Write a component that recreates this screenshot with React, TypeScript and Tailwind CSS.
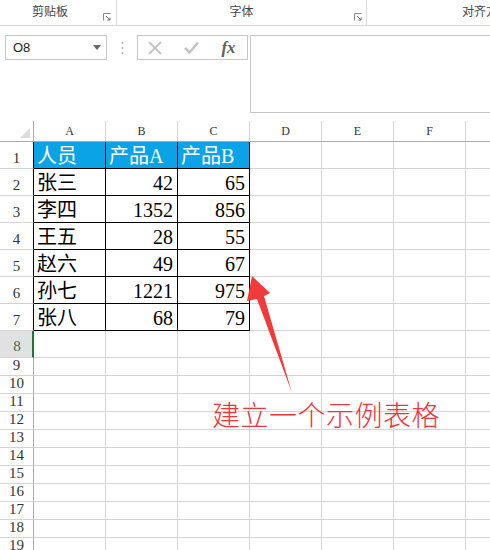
import React from "react";

const COLS = ["A", "B", "C", "D", "E", "F", ""];
const DATA: (string | number)[][] = [
  ["人员", "产品A", "产品B"],
  ["张三", 42, 65],
  ["李四", 1352, 856],
  ["王五", 28, 55],
  ["赵六", 49, 67],
  ["孙七", 1221, 975],
  ["张八", 68, 79],
];

const cellFont = { fontFamily: '"Liberation Serif", "Noto Sans CJK SC", serif' };

function Launcher() {
  return (
    <svg width="8" height="8" viewBox="0 0 8 8" className="block">
      <path d="M0.5 7.5V0.5H7.5" fill="none" stroke="#8a8a8a" strokeWidth="1" />
      <path d="M3 3L7 7M7 4.5V7H4.5" fill="none" stroke="#6a6a6a" strokeWidth="1" />
    </svg>
  );
}

function Ribbon() {
  return (
    <div
      className="flex h-[26px] border-b border-[#d5d5d5] bg-white text-[12px] text-[#444]"
      style={{ fontFamily: '"Noto Sans CJK SC", sans-serif' }}
    >
      <div className="relative flex w-[117px] items-center justify-center border-r border-[#dadada] pb-[4px]">
        <span className="pr-[16px]">剪贴板</span>
        <div className="absolute right-[5px] top-[13px]">
          <Launcher />
        </div>
      </div>
      <div className="relative flex w-[250px] items-center justify-center border-r border-[#dadada] pb-[4px]">
        <span>字体</span>
        <div className="absolute right-[4px] top-[13px]">
          <Launcher />
        </div>
      </div>
      <div className="flex flex-1 items-center justify-end overflow-hidden pb-[4px]">
        <span className="mr-[-20px] whitespace-nowrap">对齐方式</span>
      </div>
    </div>
  );
}

function FormulaBar() {
  return (
    <div className="flex h-[95px] items-start pt-[9px]">
      <div className="ml-[5px] flex h-[25px] w-[102px] items-center justify-between border border-[#c6c6c6] bg-white px-[7px]">
        <span className="text-[13px] text-[#222]" style={{ fontFamily: '"Liberation Sans", sans-serif' }}>
          O8
        </span>
        <svg width="8" height="5" viewBox="0 0 8 5" className="mr-[-2px]">
          <path d="M0 0H8L4 5Z" fill="#666" />
        </svg>
      </div>
      <div className="flex h-[25px] w-[30px] items-center justify-center">
        <svg width="3" height="14" viewBox="0 0 3 14">
          <circle cx="1.5" cy="2" r="1" fill="#b5b5b5" />
          <circle cx="1.5" cy="7" r="1" fill="#b5b5b5" />
          <circle cx="1.5" cy="12" r="1" fill="#b5b5b5" />
        </svg>
      </div>
      <div className="flex h-[25px] w-[111px] items-center border border-[#c6c6c6] bg-white">
        <div className="flex w-[34px] justify-center">
          <svg width="14" height="14" viewBox="0 0 14 14">
            <path d="M1 1L13 13M13 1L1 13" stroke="#c4c4c4" strokeWidth="2" />
          </svg>
        </div>
        <div className="flex w-[38px] justify-center">
          <svg width="15" height="13" viewBox="0 0 15 13">
            <path d="M1 7L5.5 11.5L14 1.5" fill="none" stroke="#c4c4c4" strokeWidth="2.6" />
          </svg>
        </div>
        <div className="flex flex-1 justify-center">
          <span
            className="text-[17px] italic font-bold leading-none text-[#606060]"
            style={{ fontFamily: '"Liberation Serif", serif' }}
          >
            fx
          </span>
        </div>
      </div>
      <div className="ml-[2px] h-[78px] flex-1 border border-r-0 border-[#c6c6c6] bg-white" />
    </div>
  );
}

function HeaderRow() {
  return (
    <div className="flex h-[21px] border-b border-[#ababab]">
      <div className="relative w-[34px] shrink-0 border-r border-[#ababab] bg-white">
        <svg width="10" height="10" viewBox="0 0 10 10" className="absolute bottom-[3px] right-[3px]">
          <path d="M10 0V10H0Z" fill="#dcdcdc" />
        </svg>
      </div>
      {COLS.map((c, i) => (
        <div
          key={i}
          className="flex w-[72px] shrink-0 items-center justify-center border-r border-[#d4d4d4] bg-white text-[12px] text-[#333]"
          style={{ fontFamily: '"Liberation Serif", serif' }}
        >
          {c}
        </div>
      ))}
    </div>
  );
}

function RowHeader({ n, selected, black }: { n: number; selected?: boolean; black?: boolean }) {
  return (
    <div
      className={
        "flex w-[34px] shrink-0 items-end justify-center pb-[1px] text-[15px] leading-none " +
        (selected
          ? "border-r-2 border-[#217346] bg-[#e1e1e1] text-[#3d6e55] "
          : "bg-white text-[#333] border-r " + (black ? "border-black " : "border-[#ababab] ")) +
        "border-b border-b-[#d4d4d4]"
      }
      style={{ fontFamily: '"Liberation Serif", serif' }}
    >
      <span className={selected ? "mr-[-2px] pb-[2px]" : "pb-[1px]"}>{n}</span>
    </div>
  );
}

function App() {
  const rows: React.ReactNode[] = [];
  for (let r = 1; r <= 19; r++) {
    const h = r <= 8 ? "h-[27px]" : "h-[18px]";
    const data = DATA[r - 1];
    rows.push(
      <div key={r} className={"flex " + h}>
        <RowHeader n={r} selected={r === 8} black={r <= 7} />
        {COLS.map((c, ci) => {
          if (data && ci < 3) {
            const v = data[ci];
            const isHeader = r === 1;
            const isNum = typeof v === "number";
            return (
              <div
                key={ci}
                className={
                  "flex w-[72px] shrink-0 items-center overflow-hidden border-r border-b border-black text-[20px] leading-none " +
                  (isHeader ? "bg-[#0aa3e6] text-white " : "bg-white text-black ") +
                  (isNum ? "justify-end pr-[4px] " : "justify-start pl-[3px] ")
                }
                style={cellFont}
              >
                <span className="pt-[2px]">{v}</span>
              </div>
            );
          }
          return (
            <div
              key={ci}
              className="w-[72px] shrink-0 border-r border-b border-[#d4d4d4] bg-white"
            />
          );
        })}
      </div>
    );
  }

  return (
    <div className="relative h-[550px] w-[490px] overflow-hidden bg-white">
      <Ribbon />
      <FormulaBar />
      <div className="flex flex-col">
        <HeaderRow />
        {rows}
      </div>

      <svg
        width="490"
        height="550"
        viewBox="0 0 490 550"
        className="pointer-events-none absolute left-0 top-0"
      >
        <path
          d="M252 276 L270 293 L264 296 L292 393 L257 299 L247 301 Z"
          fill="#f23a3a"
        />
      </svg>
      <div
        className="pointer-events-none absolute left-[212px] top-[400px] whitespace-nowrap text-[28px] font-light leading-none text-[#e8363c]"
        style={{ fontFamily: '"Noto Sans CJK SC", sans-serif', letterSpacing: "0.5px" }}
      >
        建立一个示例表格
      </div>
    </div>
  );
}

export default App;
